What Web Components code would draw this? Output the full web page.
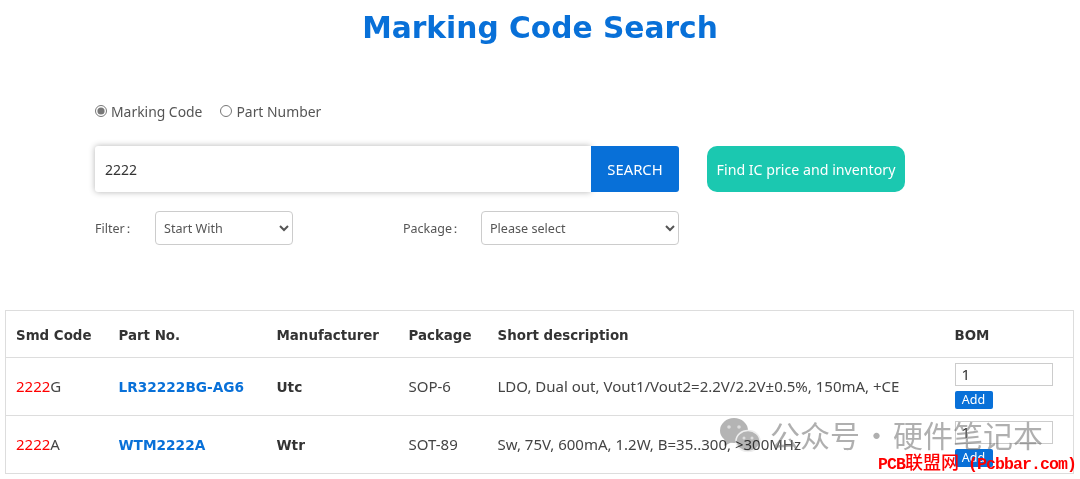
<!DOCTYPE html>
<html>
<head>
<meta charset="utf-8">
<style>
  html, body { margin: 0; padding: 0; background: #fff; }
  body { font-family: "Noto Sans", "Noto Sans CJK SC", sans-serif; color: #333; overflow: hidden; height: 479px; position: relative; }
</style>
</head>
<body>
<marking-title>Marking Code Search</marking-title>
<search-form></search-form>
<result-table></result-table>
<water-mark></water-mark>

<script>
class MarkingTitle extends HTMLElement {
    constructor() {
        super();
        this.attachShadow({mode: 'open'});
        this.shadowRoot.innerHTML = `
            <style>
                :host { display: block; text-align: center; padding-top: 7px; height: 94px; box-sizing: border-box; }
                h1 { margin: 0; font: bold 29.7px/42px "DejaVu Sans", sans-serif; color: #0870d8; }
            </style>
            <h1><slot></slot></h1>
        `;
    }
}

class SearchForm extends HTMLElement {
    constructor() {
        super();
        this.attachShadow({mode: 'open'});
        this.shadowRoot.innerHTML = `
            <style>
                :host { display: block; padding-left: 95px; height: 216px; box-sizing: border-box; font-family: "Noto Sans", sans-serif; color: #555; }
                .radios { display: flex; align-items: center; height: 34px; font-size: 13.9px; }
                .radios label { display: flex; align-items: center; gap: 4px; margin-right: 18px; }
                input[type=radio] { margin: 0; width: 12px; height: 12px; accent-color: #777; }
                .search { display: flex; margin-top: 18px; height: 46px; }
                .box { width: 496px; padding-left: 10px; box-sizing: border-box; display: flex; align-items: center; font-size: 14px; color: #333; border-radius: 3px 0 0 3px; box-shadow: 0 0 6px rgba(0,0,0,.3); }
                .go { width: 88px; background: #0870d8; color: #fff; display: flex; align-items: center; justify-content: center; font-size: 14.8px; border-radius: 0 3px 3px 0; }
                .find { margin-left: 28px; width: 198px; background: #1bc8b0; color: #fff; display: flex; align-items: center; justify-content: center; font-size: 14.2px; border-radius: 10px; }
                .filters { display: flex; align-items: center; margin-top: 19px; height: 34px; font-size: 12.5px; }
                .filters span { padding-top: 2px; }
                .filters i { font-style: normal; margin-left: -3px; }
                select { height: 34px; font: 12.6px "Noto Sans", sans-serif; color: #555; background: #fff; border: 1px solid #ccc; border-radius: 4px; padding: 0 4px; }
                .f1 { width: 60px; }
                .s1 { width: 138px; }
                .f2 { width: 78px; margin-left: 110px; }
                .s2 { width: 198px; }
            </style>
            <div class="radios">
                <label><input type="radio" name="kind" checked>Marking Code</label>
                <label><input type="radio" name="kind">Part Number</label>
            </div>
            <div class="search">
                <div class="box">2222</div>
                <div class="go">SEARCH</div>
                <div class="find">Find IC price and inventory</div>
            </div>
            <div class="filters">
                <span class="f1">Filter<i>：</i></span>
                <select class="s1"><option>Start With</option></select>
                <span class="f2">Package<i>：</i></span>
                <select class="s2"><option>Please select</option></select>
            </div>
        `;
    }
}

class ResultTable extends HTMLElement {
    constructor() {
        super();
        this.attachShadow({mode: 'open'});
        const rows = [
            ['G', 'LR32222BG-AG6', 'Utc', 'SOP-6', 'LDO, Dual out, Vout1/Vout2=2.2V/2.2V±0.5%, 150mA, +CE'],
            ['A', 'WTM2222A', 'Wtr', 'SOT-89', 'Sw, 75V, 600mA, 1.2W, B=35..300, &gt;300MHz'],
        ];
        const body = rows.map(r => `
            <tr>
                <td><span class="hit">2222</span>${r[0]}</td>
                <td><a>${r[1]}</a></td>
                <td><b>${r[2]}</b></td>
                <td>${r[3]}</td>
                <td>${r[4]}</td>
                <td class="bom"><div class="qty">1</div><div class="add">Add</div></td>
            </tr>`).join('');
        this.shadowRoot.innerHTML = `
            <style>
                :host { display: block; margin: 0 5px; font-family: "Noto Sans", sans-serif; font-size: 15px; color: #444; }
                table { border-collapse: collapse; width: 1069px; table-layout: fixed; }
                th, td { border-top: 1px solid #ddd; border-bottom: 1px solid #ddd; padding: 0 10px; text-align: left; box-sizing: border-box; }
                tr > :first-child { border-left: 1px solid #ddd; }
                tr > :last-child { border-right: 1px solid #ddd; }
                th { height: 47px; padding-top: 2px; font: bold 13.4px "DejaVu Sans", sans-serif; color: #333; }
                td { height: 58px; padding-bottom: 2px; }
                .hit { color: #f00; }
                a { font: bold 13.7px "DejaVu Sans", sans-serif; color: #0870d8; }
                b { font: bold 13.7px "DejaVu Sans", sans-serif; color: #333; }
                td.bom { padding-bottom: 0; vertical-align: top; padding-top: 5px; }
                .qty { width: 98px; height: 23px; box-sizing: border-box; border: 1px solid #ccc; padding-left: 6px; line-height: 21px; color: #333; background: #fff; }
                .add { width: 38px; height: 18px; margin-top: 5px; background: #0870d8; color: #fff; font-size: 12.5px; line-height: 18px; text-align: center; border-radius: 2px; }
            </style>
            <table>
                <colgroup><col style="width:103px"><col style="width:158px"><col style="width:132px"><col style="width:89px"><col style="width:457px"><col></colgroup>
                <tr><th>Smd Code</th><th>Part No.</th><th>Manufacturer</th><th>Package</th><th>Short description</th><th>BOM</th></tr>
                ${body}
            </table>
        `;
    }
}

class WaterMark extends HTMLElement {
    constructor() {
        super();
        this.attachShadow({mode: 'open'});
        this.shadowRoot.innerHTML = `
            <style>
                :host { position: absolute; left: 0; top: 0; width: 1080px; height: 479px; pointer-events: none; display: block; }
                svg { position: absolute; left: 720px; top: 418px; mix-blend-mode: multiply; }
                .wm { position: absolute; left: 770px; top: 416px; font: 30px/36px "Noto Sans CJK SC", sans-serif; color: rgba(110,110,110,.55); white-space: nowrap; display: flex; }
                .dot { width: 33px; text-align: center; }
                .red { position: absolute; left: 878px; top: 454px; font: bold 16.5px/20px "Liberation Mono", "Noto Sans CJK SC", monospace; letter-spacing: -.9px; color: #f00; white-space: pre; }
                .red span { font-size: 18px; font-weight: 500; letter-spacing: 0; }
            </style>
            <svg width="42" height="36" viewBox="0 0 42 36">
                <ellipse cx="14" cy="12.5" rx="14" ry="12.5" fill="#b4b4b4"/>
                <path d="M5 21 L4 28 L12 24 Z" fill="#b4b4b4"/>
                <ellipse cx="28" cy="23" rx="12" ry="10.5" fill="#b4b4b4" stroke="#eee" stroke-width="1.5"/>
                <circle cx="9" cy="9" r="1.8" fill="#ddd"/><circle cx="19" cy="9" r="1.8" fill="#ddd"/>
                <circle cx="24" cy="20" r="1.5" fill="#ddd"/><circle cx="32" cy="20" r="1.5" fill="#ddd"/>
            </svg>
            <div class="wm"><span>公众号</span><span class="dot">·</span><span>硬件笔记本</span></div>
            <div class="red">PCB<span>联盟网</span> (Pcbbar.com)</div>
        `;
    }
}

customElements.define('marking-title', MarkingTitle);
customElements.define('search-form', SearchForm);
customElements.define('result-table', ResultTable);
customElements.define('water-mark', WaterMark);
</script>
</body>
</html>
